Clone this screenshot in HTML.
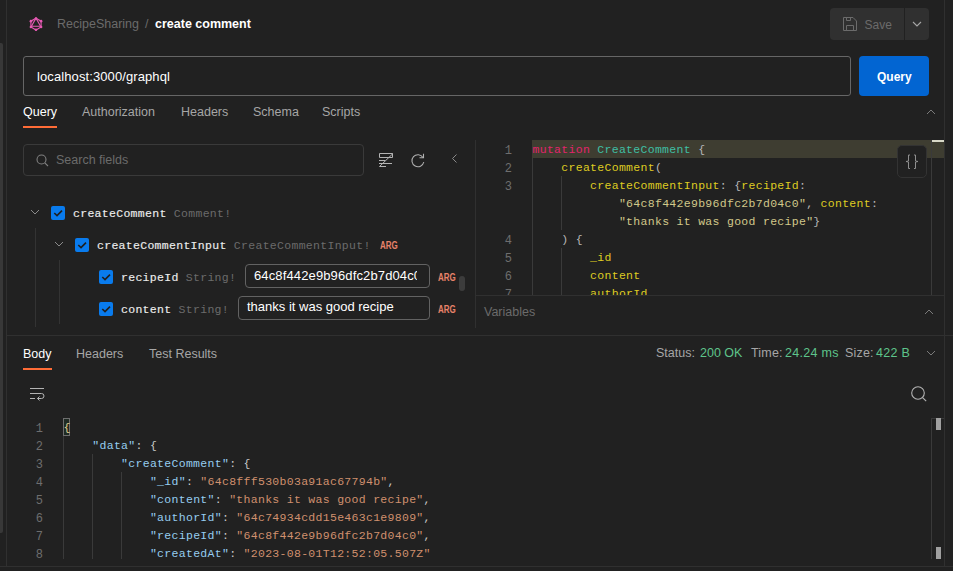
<!DOCTYPE html>
<html><head><meta charset="utf-8">
<style>
*{margin:0;padding:0;box-sizing:border-box}
html,body{width:953px;height:571px;overflow:hidden;background:#212121}
body{position:relative;font-family:"Liberation Sans",sans-serif;color:#fff}
.a{position:absolute}
.t{position:absolute;white-space:nowrap;line-height:normal}
.cl{position:absolute;white-space:pre;font-family:"Liberation Mono",monospace;font-size:11.5px;letter-spacing:0.3px;line-height:18px;height:18px}
.ln{position:absolute;white-space:pre;font-family:"Liberation Mono",monospace;font-size:12px;line-height:18px;height:18px;text-align:right;color:#6e6e6e}
.tr{-webkit-text-stroke:0.15px currentColor}.tr span{-webkit-text-stroke:0}
.kw{color:#e3246b}.ty{color:#3fbfa4}.fd{color:#dfcc22}.pu{color:#b8b8b8}.st{color:#d2c88a}
.jk{color:#96cdf0}.js{color:#d0906e}.jp{color:#c8c8c8}.jb{color:#e0d090}
</style></head><body>

<div class="a" style="left:0px;top:43px;width:3px;height:490px;background:#383838;border-radius:0 2px 2px 0;"></div>
<div class="a" style="left:6px;top:0px;width:1px;height:567px;background:#303030;"></div>
<div class="a" style="left:944px;top:0px;width:1px;height:567px;background:#303030;"></div>
<div class="a" style="left:0px;top:566px;width:953px;height:1px;background:#303030;"></div>
<svg class="a" style="left:29px;top:17px" width="14" height="15" viewBox="0 0 14 15">
 <g fill="none" stroke="#e659b3" stroke-width="1.1">
  <path d="M7 1.2 L12.1 4.15 L12.1 10.05 L7 13 L1.9 10.05 L1.9 4.15 Z"/>
  <path d="M7 1.2 L11.6 9.3 L2.4 9.3 Z"/>
 </g>
 <g fill="#e659b3"><circle cx="7" cy="1.5" r="1.3"/><circle cx="12.1" cy="4.15" r="1.3"/><circle cx="12.1" cy="10.05" r="1.3"/><circle cx="7" cy="12.8" r="1.3"/><circle cx="1.9" cy="10.05" r="1.3"/><circle cx="1.9" cy="4.15" r="1.3"/></g>
</svg>
<div class="t" style="left:57px;top:17px;font-size:12.5px;color:#6b6b6b;font-weight:400;">RecipeSharing</div>
<div class="t" style="left:145px;top:17px;font-size:12.5px;color:#6b6b6b;font-weight:400;">/</div>
<div class="t" style="left:155px;top:17px;font-size:12.5px;color:#fff;font-weight:700;">create comment</div>
<div class="a" style="left:830px;top:8px;width:74px;height:32px;background:#303030;border-radius:4px 0 0 4px;"></div>
<div class="a" style="left:905px;top:8px;width:24px;height:32px;background:#303030;border-radius:0 4px 4px 0;"></div>
<svg class="a" style="left:842px;top:16px" width="16" height="16" viewBox="0 0 16 16"><g fill="none" stroke="#6b6b6b" stroke-width="1"><path d="M1.5 1.5 H11 L14.5 5 V14.5 H1.5 Z"/><path d="M4.5 1.5 V4.5 H8.5 V1.5"/><path d="M4.5 14.5 V9.5 H11.5 V14.5"/></g></svg>
<div class="t" style="left:864.5px;top:17.5px;font-size:12px;color:#6b6b6b;font-weight:400;">Save</div>
<svg class="a" style="left:911px;top:19px" width="12" height="10" viewBox="0 0 12 10"><path d="M2 3 L6 7 L10 3" fill="none" stroke="#a6a6a6" stroke-width="1.1"/></svg>
<div class="a" style="left:23px;top:56px;width:828px;height:40px;border:1px solid #666;border-radius:3px;"></div>
<div class="t" style="left:37px;top:69px;font-size:13px;color:#fff;font-weight:400;letter-spacing:0.1px;">localhost:3000/graphql</div>
<div class="a" style="left:859px;top:56px;width:70px;height:40px;background:#0265d2;border-radius:4px;"></div>
<div class="t" style="left:877px;top:70px;font-size:12px;color:#fff;font-weight:700;">Query</div>
<div class="t" style="left:23px;top:105px;font-size:12.5px;color:#fff;font-weight:400;">Query</div>
<div class="t" style="left:82px;top:105px;font-size:12.5px;color:#a6a6a6;font-weight:400;">Authorization</div>
<div class="t" style="left:181px;top:105px;font-size:12.5px;color:#a6a6a6;font-weight:400;">Headers</div>
<div class="t" style="left:253px;top:105px;font-size:12.5px;color:#a6a6a6;font-weight:400;">Schema</div>
<div class="t" style="left:322px;top:105px;font-size:12.5px;color:#a6a6a6;font-weight:400;">Scripts</div>
<div class="a" style="left:23px;top:126px;width:34px;height:2px;background:#ff6c37;"></div>
<svg class="a" style="left:925px;top:106px" width="12" height="10" viewBox="0 0 12 10"><path d="M2 8 L6 4 L10 8" fill="none" stroke="#7a7a7a" stroke-width="1"/></svg>
<div class="a" style="left:475px;top:140px;width:1px;height:188px;background:#303030;"></div>
<div class="a" style="left:7px;top:335px;width:946px;height:1px;background:#303030;"></div>
<div class="a" style="left:23px;top:144px;width:341px;height:32px;border:1px solid #3a3a3a;border-radius:4px;"></div>
<svg class="a" style="left:36px;top:154px" width="13" height="13" viewBox="0 0 13 13"><g fill="none" stroke="#808080" stroke-width="1.1"><circle cx="5.5" cy="5.5" r="4.5"/><path d="M8.8 8.8 L12 12"/></g></svg>
<div class="t" style="left:56px;top:153px;font-size:12.5px;color:#6b6b6b;font-weight:400;">Search fields</div>
<svg class="a" style="left:378px;top:152px" width="17" height="17" viewBox="0 0 17 17"><g fill="none" stroke="#b4b4b4" stroke-width="1"><path d="M1.5 1.5 H14.5 V5.5 H1.5 Z"/><path d="M1 8.5 H7"/><path d="M1 11.5 H14"/><path d="M15 1.5 L1.5 14.5 H8"/></g></svg>
<svg class="a" style="left:410px;top:152.5px" width="16" height="16" viewBox="0 0 16 16"><g fill="none" stroke="#b0b0b0" stroke-width="1.1"><path d="M13 4.5 A6 6 0 1 0 13.8 9"/><path d="M13.5 0.8 V4.8 H9.5"/></g></svg>
<svg class="a" style="left:450px;top:153px" width="10" height="11" viewBox="0 0 10 11"><path d="M6.5 1.5 L2.5 5.5 L6.5 9.5" fill="none" stroke="#8a8a8a" stroke-width="1"/></svg>
<svg class="a" style="left:30px;top:209px" width="10" height="7" viewBox="0 0 10 7"><path d="M1 1 L5 5 L9 1" fill="none" stroke="#8a8a8a" stroke-width="1"/></svg>
<svg class="a" style="left:51px;top:206px" width="14" height="14" viewBox="0 0 14 14"><rect width="14" height="14" rx="2" fill="#097bed"/><path d="M3.3 7 L6 9.6 L11 4.6" fill="none" stroke="#1f1f1f" stroke-width="1.6"/></svg>
<div class="cl tr" style="left:73px;top:205px;color:#ececec">createComment <span style="color:#6b6b6b">Comment!</span></div>
<div class="a" style="left:35px;top:228px;width:1px;height:99px;background:#333333;"></div>
<svg class="a" style="left:54px;top:241px" width="10" height="7" viewBox="0 0 10 7"><path d="M1 1 L5 5 L9 1" fill="none" stroke="#8a8a8a" stroke-width="1"/></svg>
<svg class="a" style="left:75px;top:238px" width="14" height="14" viewBox="0 0 14 14"><rect width="14" height="14" rx="2" fill="#097bed"/><path d="M3.3 7 L6 9.6 L11 4.6" fill="none" stroke="#1f1f1f" stroke-width="1.6"/></svg>
<div class="cl tr" style="left:97px;top:237px;color:#ececec">createCommentInput <span style="color:#6b6b6b">CreateCommentInput!</span></div>
<div class="t" style="left:380px;top:240px;font-size:10px;color:#e8836a;font-weight:700;transform:scaleX(0.8);transform-origin:0 0;">ARG</div>
<div class="a" style="left:59px;top:260px;width:1px;height:64px;background:#333333;"></div>
<svg class="a" style="left:99px;top:270px" width="14" height="14" viewBox="0 0 14 14"><rect width="14" height="14" rx="2" fill="#097bed"/><path d="M3.3 7 L6 9.6 L11 4.6" fill="none" stroke="#1f1f1f" stroke-width="1.6"/></svg>
<div class="cl tr" style="left:121px;top:269px;color:#ececec">recipeId <span style="color:#6b6b6b">String!</span></div>
<div class="a" style="left:245px;top:264px;width:185px;height:24px;border:1px solid #626262;border-radius:4px;overflow:hidden;"></div>
<div class="a" style="left:246px;top:265px;width:171px;height:22px;overflow:hidden"><div class="t" style="left:8px;top:3px;font-size:13px;color:#fff;letter-spacing:0.13px">64c8f442e9b96dfc2b7d04c0</div></div>
<div class="t" style="left:438px;top:272px;font-size:10px;color:#e8836a;font-weight:700;transform:scaleX(0.8);transform-origin:0 0;">ARG</div>
<div class="a" style="left:459px;top:276px;width:6px;height:15px;background:#3c3c3c;border-radius:3px;"></div>
<svg class="a" style="left:99px;top:302px" width="14" height="14" viewBox="0 0 14 14"><rect width="14" height="14" rx="2" fill="#097bed"/><path d="M3.3 7 L6 9.6 L11 4.6" fill="none" stroke="#1f1f1f" stroke-width="1.6"/></svg>
<div class="cl tr" style="left:121px;top:301px;color:#ececec">content <span style="color:#6b6b6b">String!</span></div>
<div class="a" style="left:238px;top:296px;width:192px;height:24px;border:1px solid #626262;border-radius:4px;"></div>
<div class="t" style="left:247px;top:299px;font-size:13px;color:#fff;font-weight:400;">thanks it was good recipe</div>
<div class="t" style="left:438px;top:304px;font-size:10px;color:#e8836a;font-weight:700;transform:scaleX(0.8);transform-origin:0 0;">ARG</div>
<div class="a" style="left:532px;top:140px;width:412px;height:18px;background:#3e3d31;"></div>
<div class="a" style="left:532px;top:158px;width:1px;height:137px;background:#3a3a3a;"></div>
<div class="a" style="left:561px;top:176px;width:1px;height:54px;background:#3a3a3a;"></div>
<div class="a" style="left:561px;top:248px;width:1px;height:47px;background:#3a3a3a;"></div>
<div class="a" style="left:476px;top:140px;width:468px;height:155px;overflow:hidden">
<div class="ln" style="left:0;width:36px;top:2px">1</div>
<div class="cl" style="left:56.5px;top:1px"><span class="kw">mutation</span> <span class="ty">CreateComment</span> <span class="pu">{</span></div>
<div class="ln" style="left:0;width:36px;top:20px">2</div>
<div class="cl" style="left:56.5px;top:19px">    <span class="fd">createComment</span><span class="pu">(</span></div>
<div class="ln" style="left:0;width:36px;top:38px">3</div>
<div class="cl" style="left:56.5px;top:37px">        <span class="fd">createCommentInput</span><span class="pu">: {</span><span class="fd">recipeId</span><span class="pu">:</span></div>
<div class="cl" style="left:56.5px;top:55px">            <span class="st">"64c8f442e9b96dfc2b7d04c0"</span><span class="pu">, </span><span class="fd">content</span><span class="pu">:</span></div>
<div class="cl" style="left:56.5px;top:73px">            <span class="st">"thanks it was good recipe"</span><span class="pu">}</span></div>
<div class="ln" style="left:0;width:36px;top:92px">4</div>
<div class="cl" style="left:56.5px;top:91px">    <span class="pu">) {</span></div>
<div class="ln" style="left:0;width:36px;top:110px">5</div>
<div class="cl" style="left:56.5px;top:109px">        <span class="fd">_id</span></div>
<div class="ln" style="left:0;width:36px;top:128px">6</div>
<div class="cl" style="left:56.5px;top:127px">        <span class="fd">content</span></div>
<div class="ln" style="left:0;width:36px;top:146px">7</div>
<div class="cl" style="left:56.5px;top:145px">        <span class="fd">authorId</span></div>
</div>
<div class="a" style="left:931px;top:140px;width:1px;height:155px;background:#3a3a3a;"></div>
<div class="a" style="left:932px;top:140px;width:12px;height:2px;background:#d8d8c8;"></div>
<div class="a" style="left:897px;top:145px;width:30px;height:33px;background:#212121;border:1px solid #333;border-radius:5px;"></div>
<svg class="a" style="left:904px;top:154px" width="16" height="16" viewBox="0 0 16 16"><g fill="none" stroke="#8f8f8f" stroke-width="1"><path d="M6 1 H4.5 V7 L2 7.5 L4.5 8 V14.5 H6"/><path d="M10 1 H11.5 V7 L14 7.5 L11.5 8 V14.5 H10"/></g></svg>
<div class="a" style="left:476px;top:295px;width:468px;height:1px;background:#303030;"></div>
<div class="t" style="left:484px;top:305px;font-size:12.5px;color:#6b6b6b;font-weight:400;">Variables</div>
<svg class="a" style="left:923px;top:307px" width="12" height="10" viewBox="0 0 12 10"><path d="M2 7 L6 3 L10 7" fill="none" stroke="#7a7a7a" stroke-width="1"/></svg>
<div class="t" style="left:23px;top:347px;font-size:12.5px;color:#fff;font-weight:400;">Body</div>
<div class="t" style="left:76px;top:347px;font-size:12.5px;color:#a6a6a6;font-weight:400;">Headers</div>
<div class="t" style="left:149px;top:347px;font-size:12.5px;color:#a6a6a6;font-weight:400;">Test Results</div>
<div class="a" style="left:23px;top:368px;width:29px;height:2px;background:#ff6c37;"></div>
<div class="t" style="left:656px;top:346px;font-size:12.5px;color:#a6a6a6;font-weight:400;">Status:</div>
<div class="t" style="left:700px;top:346px;font-size:12.5px;color:#5ec48b;font-weight:400;">200 OK</div>
<div class="t" style="left:751px;top:346px;font-size:12.5px;color:#a6a6a6;font-weight:400;letter-spacing:0.2px;">Time:</div>
<div class="t" style="left:785px;top:346px;font-size:12.5px;color:#5ec48b;font-weight:400;letter-spacing:0.3px;">24.24 ms</div>
<div class="t" style="left:845px;top:346px;font-size:12.5px;color:#a6a6a6;font-weight:400;letter-spacing:0.2px;">Size:</div>
<div class="t" style="left:876px;top:346px;font-size:12.5px;color:#5ec48b;font-weight:400;letter-spacing:0.3px;">422 B</div>
<svg class="a" style="left:925px;top:348px" width="12" height="10" viewBox="0 0 12 10"><path d="M2 3 L6 7 L10 3" fill="none" stroke="#7a7a7a" stroke-width="1"/></svg>
<svg class="a" style="left:29px;top:386px" width="17" height="16" viewBox="0 0 17 16"><g fill="none" stroke="#b4b4b4" stroke-width="1"><path d="M1 2.5 H15"/><path d="M1 7.5 H12.5 A2.5 2.5 0 0 1 12.5 12.5 H8.5"/><path d="M10.5 10.5 L8.5 12.5 L10.5 14.5"/><path d="M1 12.5 H6"/></g></svg>
<svg class="a" style="left:910px;top:385px" width="18" height="18" viewBox="0 0 18 18"><g fill="none" stroke="#b4b4b4" stroke-width="1.1"><circle cx="8" cy="8" r="6.3"/><path d="M12.6 12.6 L16.2 16.2"/></g></svg>
<div class="a" style="left:63px;top:418px;width:7px;height:18px;background:#1f2a23;border:1px solid #6e6e6e;"></div>
<div class="a" style="left:63px;top:436px;width:1px;height:123px;background:#3a3a3a;"></div>
<div class="a" style="left:92px;top:454px;width:1px;height:105px;background:#3a3a3a;"></div>
<div class="a" style="left:121px;top:472px;width:1px;height:87px;background:#3a3a3a;"></div>
<div class="a" style="left:7px;top:418px;width:924px;height:141px;overflow:hidden">
<div class="ln" style="left:0;width:36px;top:2px">1</div>
<div class="cl" style="left:56.5px;top:1px"><span class="jb">{</span></div>
<div class="ln" style="left:0;width:36px;top:20px">2</div>
<div class="cl" style="left:56.5px;top:19px">    <span class="jk">"data"</span><span class="jp">: {</span></div>
<div class="ln" style="left:0;width:36px;top:38px">3</div>
<div class="cl" style="left:56.5px;top:37px">        <span class="jk">"createComment"</span><span class="jp">: {</span></div>
<div class="ln" style="left:0;width:36px;top:56px">4</div>
<div class="cl" style="left:56.5px;top:55px">            <span class="jk">"_id"</span><span class="jp">: </span><span class="js">"64c8fff530b03a91ac67794b"</span><span class="jp">,</span></div>
<div class="ln" style="left:0;width:36px;top:74px">5</div>
<div class="cl" style="left:56.5px;top:73px">            <span class="jk">"content"</span><span class="jp">: </span><span class="js">"thanks it was good recipe"</span><span class="jp">,</span></div>
<div class="ln" style="left:0;width:36px;top:92px">6</div>
<div class="cl" style="left:56.5px;top:91px">            <span class="jk">"authorId"</span><span class="jp">: </span><span class="js">"64c74934cdd15e463c1e9809"</span><span class="jp">,</span></div>
<div class="ln" style="left:0;width:36px;top:110px">7</div>
<div class="cl" style="left:56.5px;top:109px">            <span class="jk">"recipeId"</span><span class="jp">: </span><span class="js">"64c8f442e9b96dfc2b7d04c0"</span><span class="jp">,</span></div>
<div class="ln" style="left:0;width:36px;top:128px">8</div>
<div class="cl" style="left:56.5px;top:127px">            <span class="jk">"createdAt"</span><span class="jp">: </span><span class="js">"2023-08-01T12:52:05.507Z"</span></div>
</div>
<div class="a" style="left:931px;top:418px;width:1px;height:141px;background:#3a3a3a;"></div>
<div class="a" style="left:931px;top:418px;width:13px;height:1px;background:#3a3a3a;"></div>
<div class="a" style="left:936px;top:418px;width:5px;height:12px;background:#a0a0a0;"></div>
<div class="a" style="left:936px;top:547px;width:5px;height:12px;background:#a0a0a0;"></div>
</body></html>
